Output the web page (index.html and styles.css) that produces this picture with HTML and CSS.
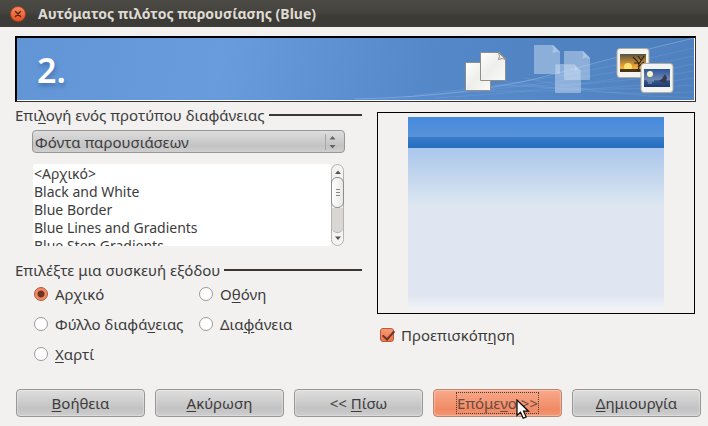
FILE: index.html
```html
<!DOCTYPE html>
<html lang="el">
<head>
    <meta charset="UTF-8">
    <meta name="viewport" content="width=device-width, initial-scale=1.0">
    <title>Αυτόματος πιλότος παρουσίασης (Blue)</title>
    <link rel="stylesheet" href="styles.css">
</head>
<body>
    <header class="titlebar">
        <button type="button" class="close-btn" aria-label="Κλείσιμο">
            <svg width="8" height="8" viewBox="0 0 8 8"><path d="M1.5 1.5l5 5M6.500 1.500l-5 5" stroke="#5c2413" stroke-width="1.500" stroke-linecap="round"/></svg>
        </button>
        <h1>Αυτόματος πιλότος παρουσίασης (Blue)</h1>
    </header>

    <form class="wizard">
        <div class="banner">
            <svg class="banner-waves" viewBox="0 0 340 62" preserveAspectRatio="none">
                <path d="M0 61Q120 58 200 36T340 0V62H0z" fill="#6fa5df" fill-opacity=".12"/>
                <g fill="none" stroke="#a4c8ee" stroke-opacity=".16">
                    <path d="M0 61Q120 58 200 36T340 0" stroke-opacity=".4"/>
                    <path d="M60 57Q200 44 340 10"/>
                    <path d="M50 59Q200 50 340 18"/>
                    <path d="M80 60Q210 54 340 26"/>
                    <path d="M130 48Q240 50 340 33"/>
                    <path d="M120 53Q240 56 340 40"/>
                    <path d="M140 46Q250 56 340 47"/>
                    <path d="M150 43Q250 60 340 54"/>
                    <path d="M170 40Q250 58 340 60"/>
                </g>
            </svg>
            <span class="step">2.</span>
            <svg class="banner-icons" width="210" height="50" viewBox="0 0 210 50">
                <defs>
                    <linearGradient id="paper" x1="0" y1="0" x2="1" y2="1">
                        <stop offset="0" stop-color="#fff"/>
                        <stop offset=".5" stop-color="#eeeeec"/>
                        <stop offset="1" stop-color="#fafafa"/>
                    </linearGradient>
                    <linearGradient id="sunset" x1="0" y1="0" x2="0" y2="1">
                        <stop offset="0" stop-color="#57513f"/>
                        <stop offset=".6" stop-color="#dc9a36"/>
                        <stop offset=".8" stop-color="#f7b23c"/>
                        <stop offset="1" stop-color="#4a3517"/>
                    </linearGradient>
                    <linearGradient id="night" x1="0" y1="0" x2="0" y2="1">
                        <stop offset="0" stop-color="#2d559b"/>
                        <stop offset=".6" stop-color="#7389b3"/>
                        <stop offset=".65" stop-color="#36568f"/>
                        <stop offset="1" stop-color="#1f3970"/>
                    </linearGradient>
                    <g id="page">
                        <path d="M.5.5h19l6 6v22h-25z"/>
                        <path d="M18.500.5q2 4 0 7 4-2 7 0z"/>
                    </g>
                </defs>
                <!-- slides -->
                <g fill="url(#paper)" stroke="#8e8d88">
                    <path d="M.5 17.500h25v28h-25z"/>
                    <use href="#page" x="15" y="7"/>
                </g>
                <!-- faded slides -->
                <g fill="#d4e4f6" fill-opacity=".45" stroke="#a9c6e8" stroke-opacity=".5">
                    <use href="#page" x="69" y="0"/>
                    <use href="#page" x="99" y="6"/>
                    <use href="#page" x="90" y="19"/>
                </g>
                <!-- pictures -->
                <rect x="152" y="3.500" width="32" height="29" rx="3" fill="#f4f4f2" stroke="#b1aca2"/>
                <path d="M155 9h26v18h-26z" fill="url(#sunset)"/>
                <circle cx="163" cy="22" r="4" fill="#ffe36b"/>
                <path d="M155 24h26v3h-26z" fill="#4a3517"/>
                <path d="M173 26q2-5 0-9l-5-5M173 18l-4 0M174 19l5-8M176 15l-3-4M173 22l6-5" fill="none" stroke="#30230f" stroke-width="1.200"/>
                <rect x="176" y="18.500" width="32" height="29" rx="3" fill="#f4f4f2" stroke="#b1aca2"/>
                <path d="M179 24h26v18h-26z" fill="url(#night)"/>
                <circle cx="185" cy="29" r="3" fill="#f7f7c4"/>
                <path d="M194 36q2-2 3-2l3-5 2 4-1 3 2 2q-5 0-9-2z" fill="#34394b"/>
                <path d="M182 36h7M183 38h4" stroke="#98a9c6"/>
            </svg>
        </div>

        <div class="columns">
            <div class="options">
                <div class="section-title">
                    <label for="template-type">Επι<u>λ</u>ογή ενός προτύπου διαφάνειας</label>
                </div>
                <div class="section-body">
                    <div class="select-wrap">
                        <select id="template-type">
                            <option>Φόντα παρουσιάσεων</option>
                        </select>
                        <svg class="select-arrows" width="14" height="16" viewBox="0 0 14 16">
                            <path d="M.5 0v16" stroke="#a6a6a6"/>
                            <path d="M4.500 5.500l3-3.500 3 3.500zM4.500 11l3 3.500 3-3.500z" fill="#666"/>
                        </svg>
                    </div>
                    <div class="listbox">
                        <select size="5" aria-label="Πρότυπο διαφάνειας">
                            <option>&lt;Αρχικό&gt;</option>
                            <option>Black and White</option>
                            <option>Blue Border</option>
                            <option>Blue Lines and Gradients</option>
                            <option>Blue Step Gradients</option>
                        </select>
                        <div class="scrollbar">
                            <svg width="12" height="12" viewBox="0 0 12 12"><path d="M3 9l3-3.500L9 9z" fill="#555"/></svg>
                            <div class="thumb"><i></i><i></i><i></i></div>
                            <div class="track"></div>
                            <svg width="12" height="12" viewBox="0 0 12 12"><path d="M3 3.500L6 7l3-3.500z" fill="#555"/></svg>
                        </div>
                    </div>
                </div>

                <div class="section-title">
                    <span id="output-title">Επιλέξτε μια συσκευή εξόδου</span>
                </div>
                <div class="radio-grid" role="radiogroup" aria-labelledby="output-title">
                    <label><input type="radio" name="output" checked><span>Αρ<u>χ</u>ικό</span></label>
                    <label><input type="radio" name="output"><span>Ο<u>θ</u>όνη</span></label>
                    <label><input type="radio" name="output"><span>Φύλλο διαφά<u>ν</u>ειας</span></label>
                    <label><input type="radio" name="output"><span>Δια<u>φ</u>άνεια</span></label>
                    <label><input type="radio" name="output"><span><u>Χ</u>αρτί</span></label>
                </div>
            </div>

            <div class="preview-col">
                <div class="preview">
                    <div class="slide"></div>
                </div>
                <label class="check"><input type="checkbox" checked><span>Προεπισκόπ<u>η</u>ση</span></label>
            </div>
        </div>

        <div class="buttons">
            <button type="button" class="btn"><span><u>Β</u>οήθεια</span></button>
            <button type="button" class="btn"><span><u>Α</u>κύρωση</span></button>
            <button type="button" class="btn"><span>&lt;&lt; <u>Π</u>ίσω</span></button>
            <button type="button" class="btn btn-active">
                <span>Επόμε<u>ν</u>ο &gt;&gt;</span>
                <svg class="pointer" width="14" height="21" viewBox="0 0 14 21"><path d="M1 1v15.500l3.500-3.200 2.700 6 3-1.300-2.700-5.800h5z" fill="#fff" stroke="#000" stroke-width="1.200"/></svg>
            </button>
            <button type="button" class="btn"><span><u>Δ</u>ημιουργία</span></button>
        </div>
    </form>
</body>
</html>
```
FILE: styles.css
```css
* {
    box-sizing: border-box;
}
body {
    margin: 0;
    background-color: #f2f1f0;
    color: #3c3c3c;
    font-family: "Noto Sans", "Open Sans", sans-serif;
    font-size: 15px;
    line-height: 18px;
}
button, select {
    font: inherit;
    color: inherit;
}
u {
    text-underline-offset: 2px;
}
.titlebar {
    display: flex;
    align-items: center;
    gap: 12px;
    height: 27px;
    padding: 0 10px;
    background: linear-gradient(#4b4a45, #45443f 45%, #3c3b37 60%);
}
.titlebar h1 {
    margin: 0;
    font-size: 14px;
    font-weight: 700;
    color: #dfdbd2;
}
.close-btn {
    display: flex;
    align-items: center;
    justify-content: center;
    width: 16px;
    height: 16px;
    padding: 0;
    border: 1px solid #a5421f;
    border-radius: 50%;
    background: linear-gradient(#f58a62, #e8521f);
}
.wizard {
    padding: 9px 13px 9px 15px;
}

/* banner */
.banner {
    position: relative;
    display: flex;
    align-items: center;
    justify-content: space-between;
    height: 66px;
    margin-right: -1px;
    padding: 0 20px;
    border: 2px solid #000;
    border-right: 1px solid #333;
    border-bottom: 1px solid #333;
    box-shadow: inset -1px -1px #fff;
    background: linear-gradient(100deg, #6295d6, #699cdd 30%, #5588c9 60%, #4c7dbb);
}
.banner-waves {
    position: absolute;
    right: 1px;
    bottom: 1px;
    width: 50%;
    height: 62px;
}
.step {
    color: #fff;
    font-size: 34px;
    line-height: 40px;
    font-weight: 600;
    text-shadow: 1px 3px 4px rgba(30, 60, 120, 0.4);
}
.banner-icons {
    position: relative;
}

/* main area */
.columns {
    display: grid;
    grid-template-columns: 347fr 318fr;
    gap: 15px;
    margin-top: 4px;
}
.section-title {
    display: flex;
    align-items: center;
    gap: 4px;
}
.section-title::after {
    content: "";
    flex: 1;
    height: 2px;
    background-color: #3c3633;
}
.section-body {
    padding: 6px 17px 15px;
}
.select-wrap {
    position: relative;
}
.select-wrap select {
    display: block;
    width: 100%;
    height: 23px;
    padding: 0 2px;
    border: 1px solid #979797;
    border-radius: 4px;
    appearance: none;
    background: linear-gradient(#dedede, #c3c3c3 70%, #cfcfcf);
}
.select-arrows {
    position: absolute;
    top: 4px;
    right: 6px;
    pointer-events: none;
}
.listbox {
    display: flex;
    height: 82px;
    margin-top: 11px;
    padding: 0 1px;
}
.listbox select {
    flex: 1;
    height: 82px;
    padding: 0;
    border: none;
    overflow: hidden;
    background-color: #fff;
    font-size: 14px;
}
.listbox option {
    display: flex;
    align-items: center;
    height: 18px;
    min-height: 18px;
    padding: 0 1px;
}
.scrollbar {
    display: flex;
    flex-direction: column;
    align-items: center;
    width: 13px;
    border: 1px solid #b5b3b1;
    border-radius: 7px;
    background-color: #f4f3f2;
}
.thumb {
    display: flex;
    flex-direction: column;
    align-items: center;
    justify-content: center;
    gap: 2px;
    width: 13px;
    height: 31px;
    flex-shrink: 0;
    border: 1px solid #8f8d8b;
    border-radius: 6px;
    background: linear-gradient(90deg, #fff, #e9e8e7);
}
.thumb i {
    width: 4px;
    height: 1px;
    background-color: #888;
}
.track {
    flex: 1;
    width: 11px;
    border-bottom: 1px solid #b5b3b1;
    border-radius: 0 0 5px 5px;
    background-color: #dad6d4;
}

/* radio buttons and checkbox */
.radio-grid {
    display: grid;
    grid-template-columns: 165fr 148fr;
    row-gap: 12px;
    padding: 6px 15px 0 19px;
}
.radio-grid label, .check {
    display: flex;
    align-items: center;
    gap: 7px;
    white-space: nowrap;
}
input[type="radio"], input[type="checkbox"] {
    appearance: none;
    flex-shrink: 0;
    width: 14px;
    height: 14px;
    margin: 0;
    border: 1px solid #9c9a98;
    background-color: #fff;
}
input[type="radio"] {
    border-radius: 50%;
}
input[type="radio"]:checked {
    border-color: #b0573a;
    background: radial-gradient(circle, #6b3423 0 3px, #f28a63 4px);
}
input[type="checkbox"] {
    border-radius: 3px;
}
input[type="checkbox"]:checked {
    position: relative;
    border-color: #b9583a;
    background: linear-gradient(#f79a77, #ec7449);
}
input[type="checkbox"]:checked::after {
    content: "";
    position: absolute;
    left: 4px;
    top: -1px;
    width: 5px;
    height: 10px;
    border: solid #6b3423;
    border-width: 0 2px 2px 0;
    transform: rotate(42deg);
}

/* preview */
.preview {
    margin-top: 6px;
    padding: 4px 30px;
    border: 1px solid #000;
}
.slide {
    aspect-ratio: 4 / 3;
    background: linear-gradient(#458ade 0, #5792d8 10.4%, #387cca 10.4%, #266dbe 16.1%, #aac7ec 16.1%, #dce6f0 46%, #dfe6f2 47%, #dfe6f1 93%, #f1f3f8);
}
.check {
    margin: 12px 0 0 3px;
}

/* bottom buttons */
.buttons {
    display: grid;
    grid-template-columns: repeat(5, 1fr);
    gap: 10px;
    margin: 26px -6px 0 1px;
}
.btn {
    position: relative;
    height: 28px;
    padding: 0;
    border: 1px solid #979797;
    border-radius: 4px;
    background: linear-gradient(#dedede, #c3c3c3 70%, #cdcdcd);
    box-shadow: inset 0 0 1px 1px rgba(255, 255, 255, 0.3);
}
.btn-active {
    border-color: #b98673;
    background: linear-gradient(#f9a98b, #f08a64 75%, #f29673);
    color: #6a4a40;
}
.btn-active span {
    outline: 1px dotted #4a3a34;
}
.pointer {
    position: absolute;
    left: 82px;
    top: 9px;
}
```
